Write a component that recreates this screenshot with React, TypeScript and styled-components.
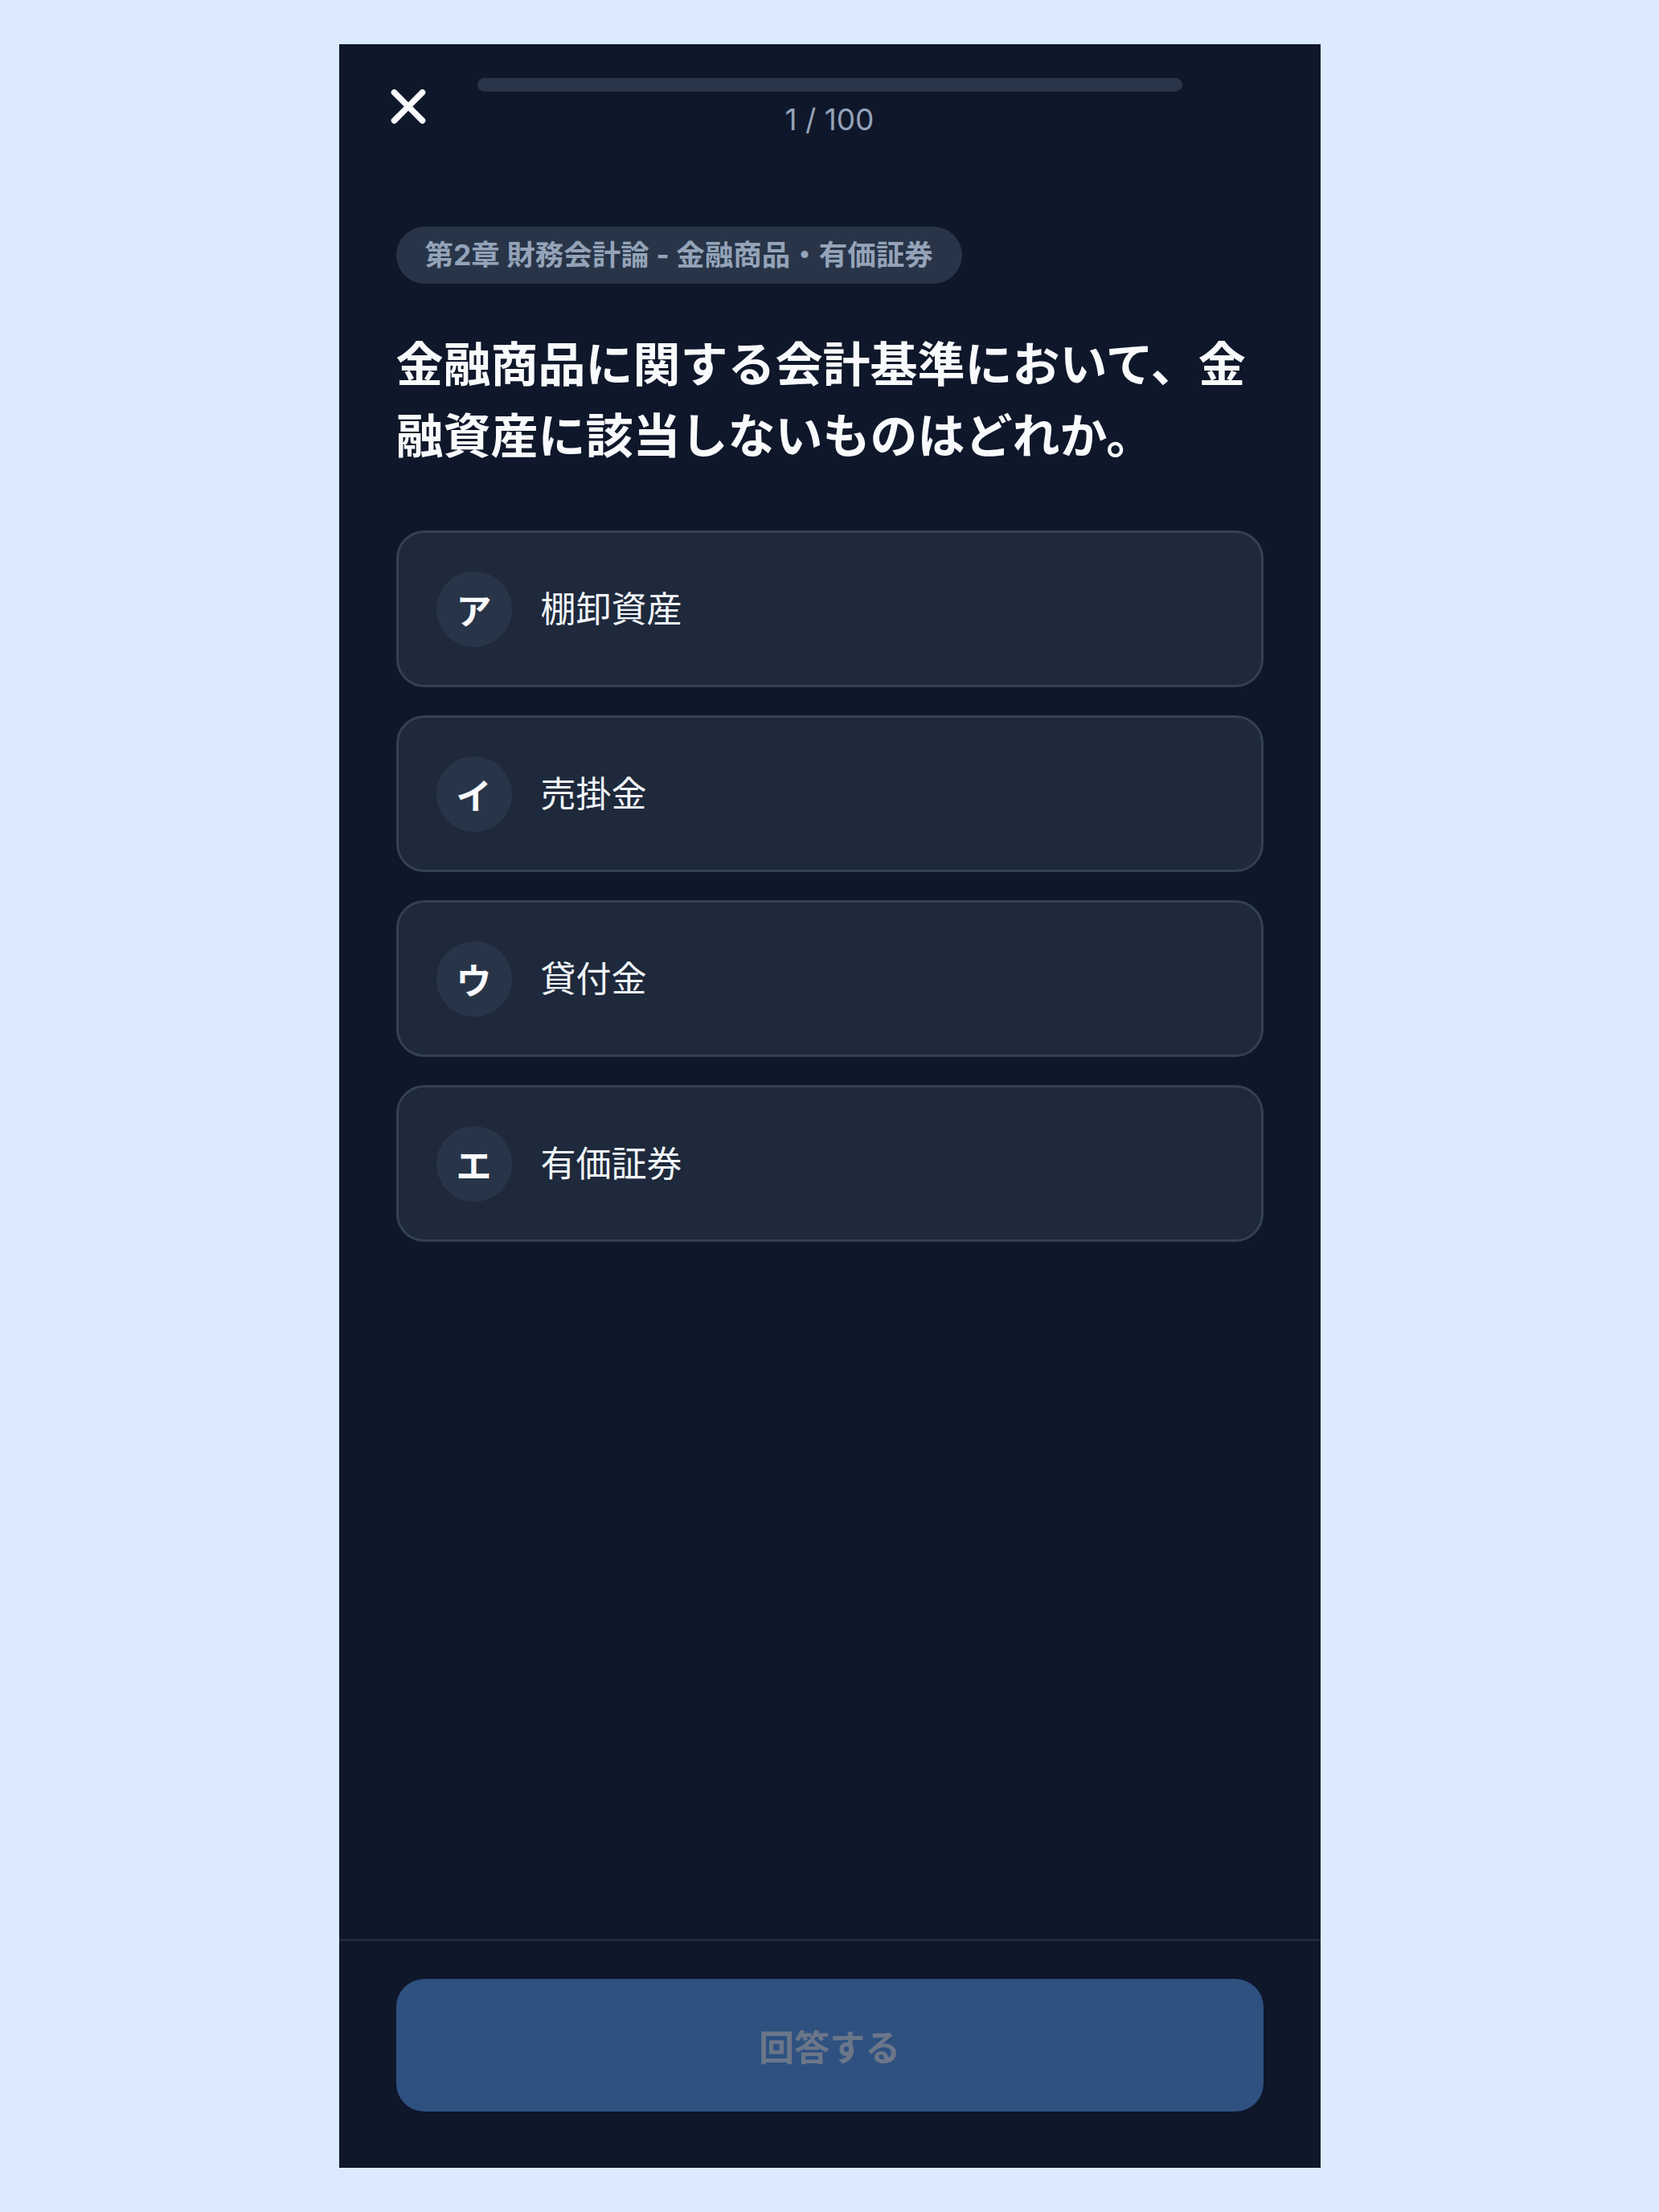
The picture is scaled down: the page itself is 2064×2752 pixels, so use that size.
import React from 'react';
import styled, { createGlobalStyle } from 'styled-components';
import { X } from 'lucide-react';

const GlobalStyle = createGlobalStyle`
  html, body {
    margin: 0;
    padding: 0;
    background: #dbeafe;
  }
  body {
    font-family: Inter, "Noto Sans CJK JP", sans-serif;
  }
  * {
    box-sizing: border-box;
  }
`;

const Page = styled.div`
  min-height: 2752px;
  display: flex;
  align-items: center;
  justify-content: center;
`;

const Phone = styled.div`
  width: 1221px;
  height: 2642px;
  background: #0f172a;
  display: flex;
  flex-direction: column;
`;

const Header = styled.header`
  display: grid;
  grid-template-columns: 172px 1fr 172px;
  align-items: start;
  padding-top: 42px;
`;

const CloseButton = styled.button`
  justify-self: center;
  width: 70px;
  height: 70px;
  display: flex;
  align-items: center;
  justify-content: center;
  padding: 0;
  border: 0;
  background: none;
  color: #f8fafc;
  cursor: pointer;
`;

const Progress = styled.div`
  display: flex;
  flex-direction: column;
  align-items: center;
`;

const Track = styled.div`
  width: 100%;
  height: 17px;
  border-radius: 9px;
  background: #293548;
`;

const Counter = styled.span`
  margin-top: 9px;
  font-size: 37px;
  line-height: 52px;
  color: #94a3b8;
`;

const Main = styled.main`
  flex: 1;
  display: flex;
  flex-direction: column;
  align-items: flex-start;
  padding: 107px 71px 0;
`;

const Chapter = styled.span`
  padding: 12px 36px;
  border-radius: 999px;
  background: #283548;
  color: #94a3b8;
  font-size: 35.5px;
  font-weight: 700;
  line-height: 47px;
`;

const Question = styled.h1`
  margin: 57px 0 73px;
  font-size: 59px;
  font-weight: 700;
  line-height: 88.5px;
  color: #f8fafc;
`;

const Options = styled.div`
  align-self: stretch;
  display: flex;
  flex-direction: column;
  gap: 35px;
`;

const Option = styled.button`
  height: 195px;
  display: flex;
  align-items: center;
  gap: 36px;
  padding: 0 47px;
  border: 3px solid #334155;
  border-radius: 35px;
  background: #1e293b;
  font-family: inherit;
  text-align: left;
  cursor: pointer;
`;

const Mark = styled.span`
  flex: none;
  width: 94px;
  height: 94px;
  border-radius: 50%;
  display: flex;
  align-items: center;
  justify-content: center;
  background: #283548;
  color: #f8fafc;
  font-size: 44px;
  font-weight: 700;
`;

const Label = styled.span`
  font-size: 44px;
  font-weight: 400;
  line-height: 66px;
  color: #f1f5f9;
`;

const Footer = styled.footer`
  border-top: 3px solid #1e293b;
  padding: 47px 71px 70px;
`;

const Submit = styled.button`
  width: 100%;
  height: 165px;
  border: 0;
  border-radius: 35px;
  background: #2e5180;
  color: #6b7689;
  font-family: inherit;
  font-size: 44px;
  font-weight: 700;
  cursor: not-allowed;
`;

const choices = [
  { mark: 'ア', text: '棚卸資産' },
  { mark: 'イ', text: '売掛金' },
  { mark: 'ウ', text: '貸付金' },
  { mark: 'エ', text: '有価証券' },
];

export default function App() {
  return (
    <Page>
      <GlobalStyle />
      <Phone>
        <Header>
          <CloseButton aria-label="閉じる">
            <X size={71} strokeWidth={2.6} />
          </CloseButton>
          <Progress>
            <Track />
            <Counter>1 / 100</Counter>
          </Progress>
        </Header>

        <Main>
          <Chapter>第2章 財務会計論 - 金融商品・有価証券</Chapter>
          <Question>
            金融商品に関する会計基準において、金融資産に該当しないものはどれか。
          </Question>
          <Options>
            {choices.map((c) => (
              <Option key={c.mark}>
                <Mark>{c.mark}</Mark>
                <Label>{c.text}</Label>
              </Option>
            ))}
          </Options>
        </Main>

        <Footer>
          <Submit disabled>回答する</Submit>
        </Footer>
      </Phone>
    </Page>
  );
}
